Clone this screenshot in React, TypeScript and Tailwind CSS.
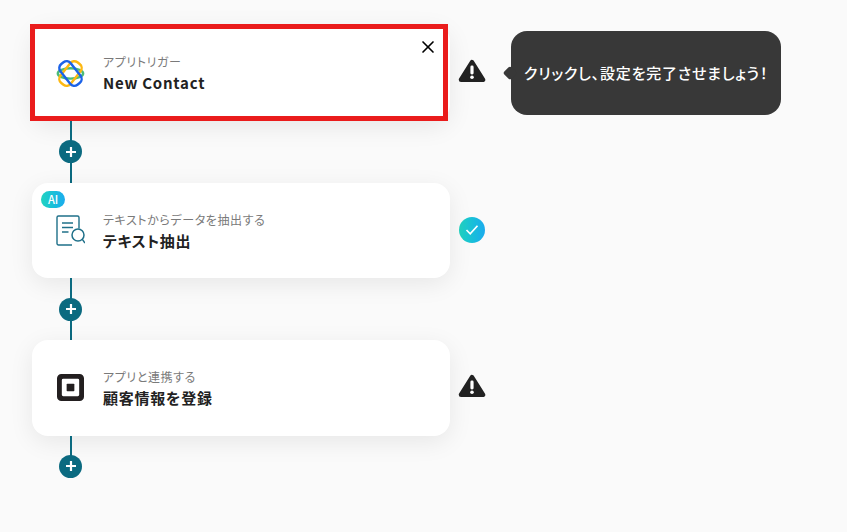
import { X } from "lucide-react";
import type { ReactNode } from "react";

function Warning() {
  return (
    <svg width="28" height="24" viewBox="0 0 28 24" className="mt-[-4px] shrink-0">
      <path
        d="M14 3.2 L25 20.8 H3 Z"
        fill="#222222"
        stroke="#222222"
        strokeWidth="4.5"
        strokeLinejoin="round"
      />
      <rect x="12.4" y="6.5" width="3.2" height="9" rx="1.4" fill="#ffffff" />
      <circle cx="14" cy="18.2" r="1.8" fill="#ffffff" />
    </svg>
  );
}

function Done() {
  return (
    <div className="flex h-[26px] w-[26px] shrink-0 items-center justify-center rounded-full bg-gradient-to-r from-[#22d3bf] to-[#1cabee]">
      <svg width="14" height="12" viewBox="0 0 14 12">
        <path d="M1.5 6 L5.2 9.8 L12.5 1.8" fill="none" stroke="#ffffff" strokeWidth="1.7" />
      </svg>
    </div>
  );
}

function Orbit() {
  return (
    <svg width="32" height="32" viewBox="0 0 32 32">
      <ellipse cx="16.5" cy="16.5" rx="13.5" ry="5.5" fill="none" stroke="#4cbb78" strokeWidth="2.6" />
      <rect x="2.5" y="9.5" width="28" height="14" rx="5.5" fill="none" stroke="#fdb813" strokeWidth="2.6" transform="rotate(128 16.5 16.5)" />
      <rect x="2.5" y="9.5" width="28" height="14" rx="5.5" fill="none" stroke="#1c63e8" strokeWidth="2.6" transform="rotate(52 16.5 16.5)" />
    </svg>
  );
}

function DocSearch() {
  return (
    <svg width="30" height="32" viewBox="-1 -1 30 32" fill="none" stroke="#1f7089" strokeWidth="1.4">
      <path d="M16 30 H2.5 a1.5 1.5 0 0 1 -1.5 -1.5 V2.5 a1.5 1.5 0 0 1 1.5 -1.5 H21.5 a1.5 1.5 0 0 1 1.5 1.5 V13.5" />
      <path d="M6 8 H17" strokeWidth="1.5" />
      <path d="M6 12.5 H17" strokeWidth="1.5" />
      <path d="M6 17 H12.5" strokeWidth="1.5" />
      <circle cx="22" cy="20" r="6" strokeWidth="1.5" />
      <path d="M26.3 24.4 L29 28" strokeWidth="1.5" />
    </svg>
  );
}

function SquareLogo() {
  return (
    <svg width="27" height="27" viewBox="0 0 28 28">
      <path
        fillRule="evenodd"
        fill="#231f20"
        d="M4.5 0 H23.5 a4.5 4.5 0 0 1 4.5 4.5 V23.5 a4.5 4.5 0 0 1 -4.5 4.5 H4.5 a4.5 4.5 0 0 1 -4.5 -4.5 V4.5 a4.5 4.5 0 0 1 4.5 -4.5 Z M6.5 5 a1.5 1.5 0 0 0 -1.5 1.5 V21.5 a1.5 1.5 0 0 0 1.5 1.5 H21.5 a1.5 1.5 0 0 0 1.5 -1.5 V6.5 a1.5 1.5 0 0 0 -1.5 -1.5 Z"
      />
      <rect x="10" y="10" width="8" height="8" rx="0.8" fill="#231f20" />
    </svg>
  );
}

function Connector({ last }: { last?: boolean }) {
  return (
    <div className={last ? "relative ml-[27px] flex h-[42px] w-[23px] items-end justify-center" : "relative ml-[27px] flex h-[62px] w-[23px] items-center justify-center"}>
      <div className="absolute bottom-0 left-[11px] top-0 w-[2px] bg-[#0b6a80]" />
      <div className="relative flex h-[23px] w-[23px] shrink-0 items-center justify-center rounded-full bg-[#0b6a80]">
        <svg width="10" height="10" viewBox="0 0 10 10">
          <path d="M5 0.5 V9.5 M0.5 5 H9.5" stroke="#ffffff" strokeWidth="2.2" strokeLinecap="round" />
        </svg>
      </div>
    </div>
  );
}

type StepProps = {
  icon: ReactNode;
  label: string;
  title: string;
  status: ReactNode;
  ai?: boolean;
  active?: boolean;
};

function Step({ icon, label, title, status, ai, active }: StepProps) {
  return (
    <div className="flex items-center">
      <div className="relative flex h-[95.5px] w-[418px] items-center rounded-[16px] bg-white pl-[23px] shadow-[0_6px_24px_rgba(0,0,0,0.08)]">
        {ai && (
          <div className="absolute left-[9px] top-[8px] flex h-[17px] w-[24px] items-center justify-center rounded-full bg-gradient-to-r from-[#22d3bf] to-[#1cabee] text-[11px] font-medium leading-none text-white">
            AI
          </div>
        )}
        <div className="flex w-[30px] justify-center">{icon}</div>
        <div className="ml-[18px] flex flex-col">
          <span className="text-[12px] leading-[20px] tracking-[0.6px] text-[#7a7a7a]">{label}</span>
          <span className="text-[15px] font-bold leading-[21px] tracking-[0.75px] text-[#222222]">{title}</span>
        </div>
        {active && (
          <>
            <div className="absolute left-[-2px] right-[2px] top-[-1px] bottom-[-0.5px] border-[5px] border-[#ea1c1c]" />
            <X className="absolute right-[12px] top-[12px] h-[20px] w-[20px] text-black" strokeWidth={2} />
          </>
        )}
      </div>
      <div className="ml-[9px] flex w-[26px] justify-center">{status}</div>
    </div>
  );
}

export default function App() {
  return (
    <div className="h-[532px] w-[847px] overflow-hidden bg-[#fafafa] pl-[32px] pt-[25px] font-['Noto_Sans_CJK_JP','Noto_Sans',sans-serif] [font-feature-settings:'palt']">
      <div className="relative">
        <div className="absolute left-[479px] top-[6px] flex h-[84px] w-[270px] items-center rounded-[16px] bg-[#383838] pl-[13px] pt-[1px] text-[15px] font-medium tracking-[0.8px] whitespace-nowrap text-white">
          <div className="absolute left-[-6px] top-[37px] h-[10px] w-[10px] rotate-45 rounded-[2px] bg-[#383838]" />
          <span className="relative">クリックし、設定を完了させましょう！</span>
        </div>
        <Step
          active
          icon={<Orbit />}
          label="アプリトリガー"
          title="New Contact"
          status={<Warning />}
        />
        <Connector />
        <Step
          ai
          icon={<DocSearch />}
          label="テキストからデータを抽出する"
          title="テキスト抽出"
          status={<Done />}
        />
        <Connector />
        <Step
          icon={<SquareLogo />}
          label="アプリと連携する"
          title="顧客情報を登録"
          status={<Warning />}
        />
        <Connector last />
      </div>
    </div>
  );
}
